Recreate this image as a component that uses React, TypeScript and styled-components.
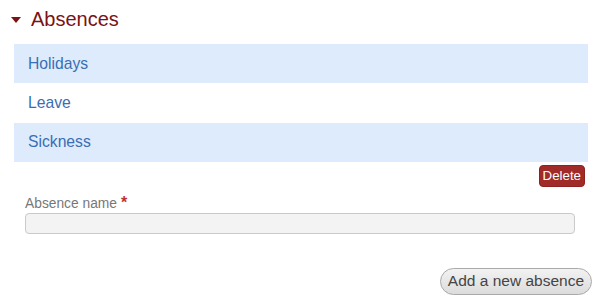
import React from 'react';
import styled, { createGlobalStyle } from 'styled-components';

const GlobalStyle = createGlobalStyle`
  body {
    margin: 0;
    background: #fff;
    font-family: "Liberation Sans", Arial, sans-serif;
  }
`;

const Page = styled.div`
  width: 600px;
  height: 305px;
  padding: 8px 12px 0 14px;
  box-sizing: border-box;
`;

const Header = styled.div`
  display: flex;
  align-items: center;
  height: 22px;
  margin-left: -3px;
  gap: 10px;
`;

const Caret = styled.span`
  width: 0;
  height: 0;
  border-left: 5px solid transparent;
  border-right: 5px solid transparent;
  border-top: 6px solid #7b1213;
  margin-top: 2px;
`;

const Title = styled.h2`
  margin: 0;
  font-size: 20px;
  font-weight: normal;
  color: #7b1213;
`;

const List = styled.ul`
  list-style: none;
  margin: 14px 0 0;
  padding: 0;
`;

const Item = styled.li<{ $shaded: boolean }>`
  height: 39.3px;
  display: flex;
  align-items: center;
  padding-left: 14px;
  background: ${(p) => (p.$shaded ? '#deebfc' : '#fff')};
  color: #3a6eb3;
  font-size: 15.7px;
`;

const Actions = styled.div`
  display: flex;
  justify-content: flex-end;
  padding: 3px 3px 0 0;
`;

const DeleteButton = styled.button`
  height: 22px;
  padding: 0 3px;
  border: 1px solid #8c2221;
  border-radius: 4px;
  background: #a02b29;
  color: #fff;
  font-family: inherit;
  font-size: 13.3px;
`;

const Field = styled.div`
  display: flex;
  flex-direction: column;
  margin: 8px 13px 0 11px;
`;

const Label = styled.label`
  color: #777;
  font-size: 13.8px;
  height: 16px;
  line-height: 16px;
`;

const Required = styled.span`
  color: #b33;
  margin-left: 4px;
  font-size: 16px;
  font-weight: bold;
`;

const Input = styled.input`
  height: 21px;
  margin-top: 2px;
  box-sizing: border-box;
  border: 1px solid #c9c9c9;
  border-radius: 4px;
  background: #f3f3f3;
`;

const Footer = styled.div`
  display: flex;
  justify-content: flex-end;
  margin-top: 34px;
  margin-right: -4px;
`;

const AddButton = styled.button`
  height: 27px;
  padding: 0 7px;
  border: 1px solid #a9a9a9;
  border-radius: 14px;
  background: linear-gradient(#f2f2f2, #dcdcdc);
  color: #444;
  font-family: inherit;
  font-size: 15.5px;
`;

const absences = ['Holidays', 'Leave', 'Sickness'];

export default function App() {
  return (
    <Page>
      <GlobalStyle />
      <Header>
        <Caret />
        <Title>Absences</Title>
      </Header>
      <List>
        {absences.map((name, i) => (
          <Item key={name} $shaded={i % 2 === 0}>
            {name}
          </Item>
        ))}
      </List>
      <Actions>
        <DeleteButton>Delete</DeleteButton>
      </Actions>
      <Field>
        <Label>
          Absence name<Required>*</Required>
        </Label>
        <Input />
      </Field>
      <Footer>
        <AddButton>Add a new absence</AddButton>
      </Footer>
    </Page>
  );
}
